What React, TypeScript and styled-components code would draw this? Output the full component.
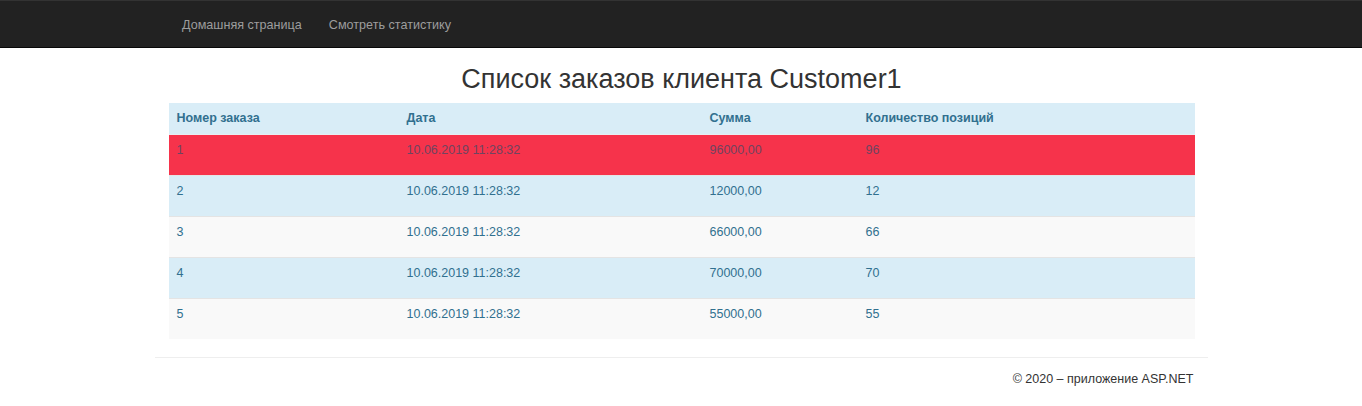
import styled, { createGlobalStyle } from 'styled-components';

const GlobalStyle = createGlobalStyle`
  html, body {
    margin: 0;
    padding: 0;
    background: #fff;
    font-family: "Liberation Sans", Arial, sans-serif;
    font-size: 13px;
    color: #333;
  }
`;

const StyledNavbar = styled.nav`
  height: 46px;
  background-color: #222;
  border-top: 1px solid #333;
  border-bottom: 1px solid #080808;
`;

const StyledNavInner = styled.div`
  width: 1053px;
  margin: 0 auto;
  padding: 1px 0 0 14px;
  box-sizing: border-box;
  display: flex;
  height: 100%;
  align-items: center;
`;

const StyledNavLink = styled.a`
  color: #9d9d9d;
  font-size: 12.6px;
  text-decoration: none;
  padding: 0 13.5px;
  cursor: pointer;
`;

const StyledBody = styled.main`
  width: 1053px;
  margin: 0 auto;
  padding: 0 13px 0 14px;
  box-sizing: border-box;
`;

const StyledTitle = styled.h2`
  margin: 16px 0 8px;
  text-align: center;
  font-size: 27px;
  font-weight: 400;
  line-height: 31px;
  color: #333;
`;

const StyledTable = styled.table`
  width: 100%;
  border-collapse: collapse;
  border-spacing: 0;
`;

const StyledHeadCell = styled.th<{ $width: number }>`
  width: ${(p) => p.$width}px;
  height: 31px;
  padding: 0 8px;
  box-sizing: border-box;
  text-align: left;
  font-weight: 700;
  font-size: 12.5px;
  color: #31708f;
  background-color: #d9edf7;
`;

type RowKind = 'danger' | 'info' | 'plain';

const rowBg: Record<RowKind, string> = {
  danger: '#f6334b',
  info: '#d9edf7',
  plain: '#f9f9f9',
};

const rowColor: Record<RowKind, string> = {
  danger: '#6f4460',
  info: '#31708f',
  plain: '#31708f',
};

const StyledRow = styled.tr<{ $kind: RowKind }>`
  background-color: ${(p) => rowBg[p.$kind]};
  color: ${(p) => rowColor[p.$kind]};
  border-top: 1px solid ${(p) => (p.$kind === 'danger' ? '#e8eef2' : '#e4e4e4')};
`;

const StyledCell = styled.td`
  height: 41px;
  padding: 7px 8px 0;
  box-sizing: border-box;
  vertical-align: top;
  font-size: 12.5px;
  line-height: 16px;
`;

const StyledFooterBox = styled.div`
  width: 1053px;
  margin: 0 auto;
`;

const StyledRule = styled.hr`
  margin: 18px 0 0;
  border: 0;
  border-top: 1px solid #eee;
`;

const StyledFooter = styled.footer`
  padding: 14px 14px 0 0;
  text-align: right;
  font-size: 12.5px;
  color: #333;
`;

const columns = [
  { title: 'Номер заказа', width: 230 },
  { title: 'Дата', width: 303 },
  { title: 'Сумма', width: 156 },
  { title: 'Количество позиций', width: 337 },
];

const orders: { id: number; date: string; sum: string; count: number; kind: RowKind }[] = [
  { id: 1, date: '10.06.2019 11:28:32', sum: '96000,00', count: 96, kind: 'danger' },
  { id: 2, date: '10.06.2019 11:28:32', sum: '12000,00', count: 12, kind: 'info' },
  { id: 3, date: '10.06.2019 11:28:32', sum: '66000,00', count: 66, kind: 'plain' },
  { id: 4, date: '10.06.2019 11:28:32', sum: '70000,00', count: 70, kind: 'info' },
  { id: 5, date: '10.06.2019 11:28:32', sum: '55000,00', count: 55, kind: 'plain' },
];

const App = () => {
  return (
    <>
      <GlobalStyle />
      <StyledNavbar>
        <StyledNavInner>
          <StyledNavLink>Домашняя страница</StyledNavLink>
          <StyledNavLink>Смотреть статистику</StyledNavLink>
        </StyledNavInner>
      </StyledNavbar>

      <StyledBody>
        <StyledTitle>Список заказов клиента Customer1</StyledTitle>
        <StyledTable>
          <thead>
            <tr>
              {columns.map((c) => (
                <StyledHeadCell key={c.title} $width={c.width}>
                  {c.title}
                </StyledHeadCell>
              ))}
            </tr>
          </thead>
          <tbody>
            {orders.map((o) => (
              <StyledRow key={o.id} $kind={o.kind}>
                <StyledCell>{o.id}</StyledCell>
                <StyledCell>{o.date}</StyledCell>
                <StyledCell>{o.sum}</StyledCell>
                <StyledCell>{o.count}</StyledCell>
              </StyledRow>
            ))}
          </tbody>
        </StyledTable>
      </StyledBody>

      <StyledFooterBox>
        <StyledRule />
        <StyledFooter>© 2020 – приложение ASP.NET</StyledFooter>
      </StyledFooterBox>
    </>
  );
};

export default App;
